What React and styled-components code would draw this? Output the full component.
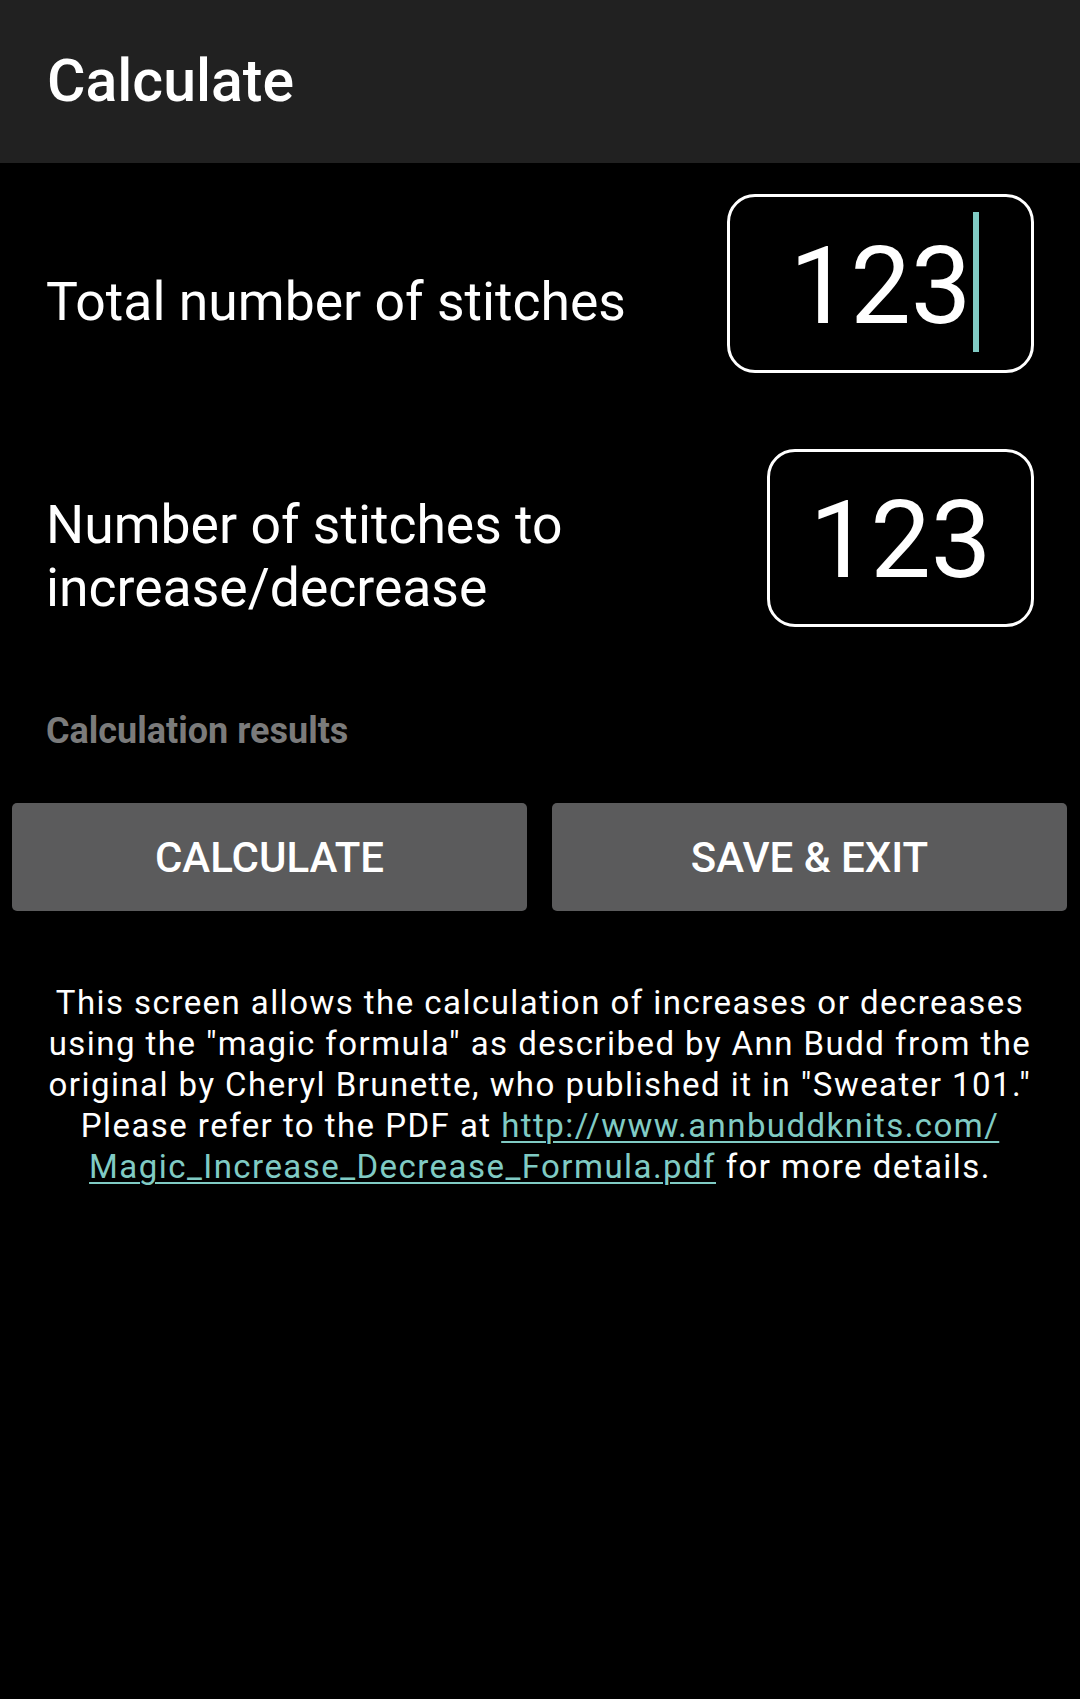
import React from "react";
import styled, { createGlobalStyle } from "styled-components";

const Global = createGlobalStyle`
  html, body { margin: 0; padding: 0; background: #000; }
  body { font-family: Roboto, "Noto Sans", "Liberation Sans", sans-serif; color: #fff; }
  * { box-sizing: border-box; }
`;

const Screen = styled.div`
  width: 1080px;
  min-height: 1699px;
  background: #000;
  display: flex;
  flex-direction: column;
`;

const AppBar = styled.header`
  height: 163px;
  background: #212121;
  display: flex;
  align-items: center;
  padding: 0 47px;
`;

const Title = styled.h1`
  margin: 0;
  font-size: 59px;
  font-weight: 500;
  color: #fff;
  line-height: 1;
  transform: translateY(-1px);
`;

const Content = styled.main`
  display: flex;
  flex-direction: column;
  padding-top: 31px;
`;

const FieldRow = styled.div`
  display: flex;
  align-items: center;
  justify-content: space-between;
  padding: 0 46px;
  margin-bottom: ${(p) => p.$gap || 0}px;
`;

const Label = styled.div`
  font-size: 53.5px;
  line-height: 63px;
  font-weight: 400;
  color: #fff;
  padding-top: 35px;
  max-width: 640px;
  white-space: nowrap;
`;

const NumberBox = styled.div`
  width: ${(p) => p.$w}px;
  height: ${(p) => p.$h}px;
  border: 3px solid #fff;
  border-radius: 28px;
  display: flex;
  align-items: center;
  justify-content: center;
  font-size: 108px;
  font-weight: 400;
  color: #fff;
  padding-top: 4px;
`;

const Value = styled.span`
  position: relative;
  line-height: 1;
  ${(p) =>
    p.$focused &&
    `
    &::after {
      content: "";
      position: absolute;
      left: calc(100% + 1px);
      top: -20px;
      width: 6px;
      height: 140px;
      background: #80cbc4;
    }
  `}
`;

const ResultsLabel = styled.div`
  margin-top: 84px;
  padding: 0 46px;
  font-size: 36px;
  line-height: 41px;
  font-weight: 700;
  color: #7b7b7b;
`;

const ButtonRow = styled.div`
  display: grid;
  grid-template-columns: 515px 515px;
  gap: 25px;
  padding: 0 12px;
  margin-top: 51px;
`;

const Button = styled.button`
  height: 108px;
  border: none;
  border-radius: 5px;
  background: #5b5b5c;
  color: #fff;
  font-family: Roboto, "Noto Sans", "Liberation Sans", sans-serif;
  font-size: 42px;
  font-weight: 500;
  text-transform: uppercase;
  padding: 0;
`;

const Info = styled.p`
  margin: 71px 0 0;
  padding: 0 10px;
  text-align: center;
  font-size: 33px;
  letter-spacing: 1.45px;
  line-height: 41px;
  color: #fff;
`;

const Link = styled.a`
  color: #80cbc4;
  text-decoration: underline;
  text-decoration-thickness: 2px;
  text-underline-offset: 4px;
`;

export default function App() {
  return (
    <>
      <Global />
      <Screen>
        <AppBar>
          <Title>Calculate</Title>
        </AppBar>
        <Content>
          <FieldRow $gap={76}>
            <Label>Total number of stitches</Label>
            <NumberBox $w={307} $h={179}>
              <Value $focused>123</Value>
            </NumberBox>
          </FieldRow>
          <FieldRow>
            <Label>
              Number of stitches to
              <br />
              increase/decrease
            </Label>
            <NumberBox $w={267} $h={178}>
              <Value>123</Value>
            </NumberBox>
          </FieldRow>
          <ResultsLabel>Calculation results</ResultsLabel>
          <ButtonRow>
            <Button>Calculate</Button>
            <Button>Save &amp; Exit</Button>
          </ButtonRow>
          <Info>
            This screen allows the calculation of increases or decreases
            <br />
            using the "magic formula" as described by Ann Budd from the
            <br />
            original by Cheryl Brunette, who published it in "Sweater 101."
            <br />
            Please refer to the PDF at{" "}
            <Link href="#">
              http://www.annbuddknits.com/
              <br />
              Magic_Increase_Decrease_Formula.pdf
            </Link>{" "}
            for more details.
          </Info>
        </Content>
      </Screen>
    </>
  );
}
